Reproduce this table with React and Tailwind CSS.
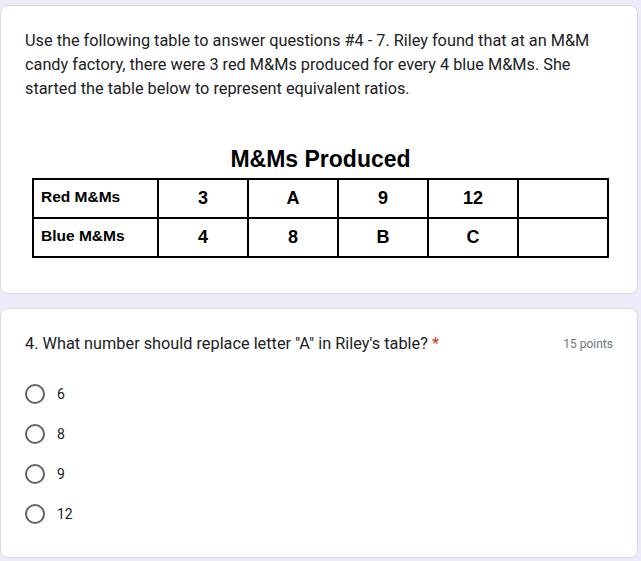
import React from "react";

const cols = [
  { red: "3", blue: "4" },
  { red: "A", blue: "8" },
  { red: "9", blue: "B" },
  { red: "12", blue: "C" },
  { red: "", blue: "" },
];

const options = ["6", "8", "9", "12"];

function Radio({ label }) {
  return (
    <label className="flex items-center h-10">
      <span className="w-5 h-5 rounded-full border-2 border-[#5f6368]" />
      <span className="ml-3 text-sm text-[#202124]">{label}</span>
    </label>
  );
}

export default function App() {
  return (
    <div
      className="min-h-[561px] w-[641px] bg-[#f0ebf8] pt-[5px] flex flex-col gap-[14px]"
      style={{ fontFamily: "Roboto, 'Liberation Sans', sans-serif" }}
    >
      {/* Description card */}
      <div className="w-[638px] h-[289px] bg-white border border-[#dadce0] rounded-lg px-6 pt-[23px]">
        <p className="text-[16.3px] leading-6 text-[#202124]">
          Use the following table to answer questions #4 - 7. Riley found that at an M&amp;M
          candy factory, there were 3 red M&amp;Ms produced for every 4 blue M&amp;Ms. She
          started the table below to represent equivalent ratios.
        </p>

        {/* Table image */}
        <div
          className="mt-[46px] flex flex-col items-center ml-[8px] w-[575px]"
          style={{ fontFamily: "'Liberation Sans', Arial, sans-serif" }}
        >
          <h2 className="text-[23px] font-bold leading-6 text-black">M&amp;Ms Produced</h2>
          <table className="mt-[7px] border-collapse border-2 border-black w-[575px] table-fixed">
            <colgroup>
              <col className="w-[125px]" />
              <col className="w-[90px]" />
              <col className="w-[90px]" />
              <col className="w-[90px]" />
              <col className="w-[90px]" />
              <col className="w-[90px]" />
            </colgroup>
            <tbody>
              <tr className="h-[39px]">
                <td className="border-2 border-black px-[7px] text-[15.5px] font-bold pb-1">Red M&amp;Ms</td>
                {cols.map((c, i) => (
                  <td key={i} className="border-2 border-black text-center text-[18px] font-bold">
                    {c.red}
                  </td>
                ))}
              </tr>
              <tr className="h-[39px]">
                <td className="border-2 border-black px-[7px] text-[15.5px] font-bold pb-1">Blue M&amp;Ms</td>
                {cols.map((c, i) => (
                  <td key={i} className="border-2 border-black text-center text-[18px] font-bold">
                    {c.blue}
                  </td>
                ))}
              </tr>
            </tbody>
          </table>
        </div>
      </div>

      {/* Question card */}
      <div className="w-[638px] h-[250px] bg-white border border-[#dadce0] rounded-lg px-6 pt-[23px]">
        <div className="flex items-start justify-between">
          <p className="text-[16.3px] leading-6 text-[#202124]">
            4. What number should replace letter "A" in Riley's table?{" "}
            <span className="text-[#d93025]">*</span>
          </p>
          <span className="text-xs text-[#70757a] mt-[4px]">15 points</span>
        </div>
        <div className="mt-[18px] flex flex-col">
          {options.map((o) => (
            <Radio key={o} label={o} />
          ))}
        </div>
      </div>
    </div>
  );
}
